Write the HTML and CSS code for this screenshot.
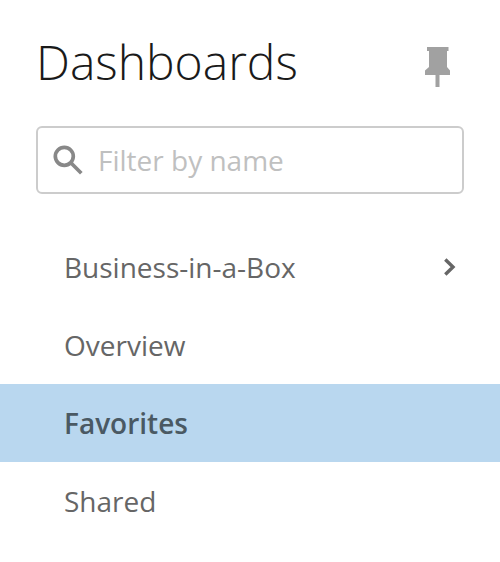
FILE: index.html
```html
<!DOCTYPE html>
<html lang="en">
<head>
<meta charset="utf-8">
<title>Dashboards</title>
<link rel="stylesheet" href="styles.css">
</head>
<body>
<aside class="panel">
  <header class="header">
    <h1 class="title">Dashboards</h1>
    <svg class="pin" viewBox="0 0 26 40" aria-hidden="true"><path d="M3 0h21.500v4h-1.500v16l3 3.500v4.500h-10.500v12h-4v-12h-10.500v-4.500l4-3.500v-16h-2z"/></svg>
  </header>
  <label class="search">
    <svg class="search-icon" viewBox="0 0 30 30" aria-hidden="true"><circle cx="11.300" cy="11.300" r="9"/><path d="M17.800 17.800L28.300 28.300"/></svg>
    <input class="search-input" type="text" placeholder="Filter by name">
  </label>
  <nav class="list">
    <a class="item"><span>Business-in-a-Box</span><svg class="chevron" viewBox="0 0 12 18" aria-hidden="true"><path d="M1.300 1.500L9 9l-7.700 7.500"/></svg></a>
    <a class="item">Overview</a>
    <a class="item active">Favorites</a>
    <a class="item">Shared</a>
  </nav>
</aside>
</body>
</html>
```
FILE: styles.css
```css
* { box-sizing: border-box; }
body {
  margin: 0;
  background: #fff;
  font-family: "Open Sans", sans-serif;
}
.panel { height: 562px; padding-top: 28px; overflow: hidden; }
.header {
  display: flex;
  justify-content: space-between;
  height: 98px;
  padding: 0 50px 0 36px;
}
.title {
  margin: 0;
  font-size: 48px;
  line-height: 68px;
  font-weight: 300;
  color: #1a1a1a;
}
.pin { width: 26px; height: 40px; margin-top: 19px; fill: #a1a1a1; }
.search {
  display: flex;
  align-items: center;
  height: 68px;
  margin: 0 36px;
  padding-left: 15px;
  border: 2px solid #ccc;
  border-radius: 6px;
}
.search-icon { width: 30px; height: 30px; fill: none; stroke: #888; stroke-width: 3.7; }
.search-input {
  flex: 1;
  min-width: 0;
  margin-left: 15px;
  padding: 0;
  border: 0;
  outline: 0;
  background: transparent;
  font: 28px "Open Sans", sans-serif;
}
.search-input::placeholder { color: #bfc0c0; opacity: 1; }
.list { margin-top: 34px; }
.item {
  display: flex;
  align-items: center;
  justify-content: space-between;
  height: 78px;
  padding: 0 44px 0 64px;
  font-size: 28px;
  line-height: 38px;
  color: #666;
}
.active { background: #b9d7ef; color: #4a5963; font-weight: 600; }
.chevron { width: 12px; height: 18px; fill: none; stroke: #666; stroke-width: 3.4; }
```
